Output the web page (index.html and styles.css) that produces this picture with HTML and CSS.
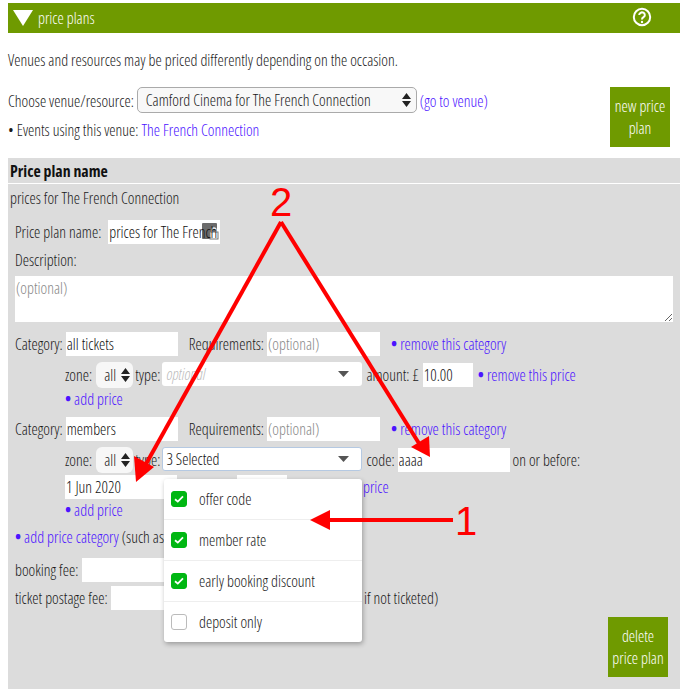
FILE: index.html
```html
<!DOCTYPE html>
<html lang="en">
<head>
<meta charset="utf-8">
<title>price plans</title>
<link rel="stylesheet" href="styles.css">
</head>
<body>
<div class="page">
  <header class="bar">
    <span class="tri"></span>
    <span class="bar-title">price plans</span>
    <svg class="help" width="20" height="20" viewBox="0 0 20 20"><circle cx="10" cy="10" r="8.2" fill="none" stroke="#fff" stroke-width="2"/><path d="M7.2 8a2.8 2.6 0 1 1 4.3 2.2c-1 .6-1.5 1.1-1.5 2.2" fill="none" stroke="#fff" stroke-width="2"/><circle cx="10" cy="15" r="1.2" fill="#fff"/></svg>
  </header>
  <p class="intro">Venues and resources may be priced differently depending on the occasion.</p>
  <div class="venue">
    <div class="venue-main">
      <div class="venue-row">
        <span class="nudge">Choose venue/resource:</span>
        <span class="select-big">Camford Cinema for The French Connection
          <svg class="updown" width="9" height="14" viewBox="0 0 9 14"><path d="M4.5 0 9 6H0zM4.5 14 0 8h9z" fill="#222"/></svg>
        </span>
        <a class="link nudge">(go to venue)</a>
      </div>
      <div class="events">• Events using this venue: <a class="link">The French Connection</a></div>
    </div>
    <div class="btn">new price plan</div>
  </div>
  <section class="panel">
    <div class="panel-head">Price plan name</div>
    <div class="panel-name">prices for The French Connection</div>
    <div class="row name-row">
      <span>Price plan name:</span>
      <span class="name-wrap">
        <svg class="lock" width="17" height="18" viewBox="0 0 17 18"><rect width="15" height="16" rx="1" fill="#6b6b6b"/><rect x="8" y="9" width="8" height="7" fill="#fff" stroke="#777"/><path d="M10 9V7a2 2 0 0 1 4 0v2" fill="none" stroke="#eee" stroke-width="1.3"/></svg>
        <input class="input name-input" value="prices for The French Connection">
      </span>
    </div>
    <div class="row desc-label">Description:</div>
    <textarea class="textarea" placeholder="(optional)"></textarea>

    <div class="row cat-row">
      <span>Category:</span><input class="input w112 ml3" value="all tickets">
      <span class="ml11">Requirements:</span><input class="input w113 ml3" placeholder="(optional)">
      <a class="link ml11"><i class="dot">•</i> remove this category</a>
    </div>
    <div class="row sub-row">
      <span>zone:</span>
      <span class="select-zone">all<svg width="9" height="14" viewBox="0 0 9 14"><path d="M4.5 0 9 6H0zM4.5 14 0 8h9z" fill="#222"/></svg></span>
      <span>type:</span>
      <span class="combo ph-it">optional<svg class="caret" width="11" height="6" viewBox="0 0 11 6"><path d="M0 0h11L5.500 6z" fill="#555"/></svg></span>
      <span class="ml4">amount: £</span><input class="input w50 ml4" value="10.00">
      <a class="link ml5"><i class="dot">•</i> remove this price</a>
    </div>
    <div class="row add-row"><a class="link"><i class="dot">•</i> add price</a></div>

    <div class="row cat-row cat2">
      <span>Category:</span><input class="input w112 ml3" value="members">
      <span class="ml11">Requirements:</span><input class="input w113 ml3" placeholder="(optional)">
      <a class="link ml11"><i class="dot">•</i> remove this category</a>
    </div>
    <div class="row sub-row">
      <span>zone:</span>
      <span class="select-zone">all<svg width="9" height="14" viewBox="0 0 9 14"><path d="M4.5 0 9 6H0zM4.5 14 0 8h9z" fill="#222"/></svg></span>
      <span>type:</span>
      <span class="combo focus">3 Selected<svg class="caret" width="11" height="6" viewBox="0 0 11 6"><path d="M0 0h11L5.500 6z" fill="#555"/></svg></span>
      <span class="ml4">code:</span><input class="input w112 ml3" value="aaaa">
      <span class="ml3">on or before:</span>
    </div>
    <div class="row date-row">
      <input class="input w112" value="1 Jun 2020">
      <input class="input w50 ml60">
      <a class="link price-link">price</a>
    </div>
    <div class="row add-row"><a class="link"><i class="dot">•</i> add price</a></div>
    <div class="row cat-add"><a class="link"><i class="dot">•</i> add price category</a>&nbsp;(such as</div>
    <div class="row fee"><span>booking fee:</span><input class="input w90 ml4"></div>
    <div class="row fee fee2"><span>ticket postage fee:</span><input class="input w90 ml3"><span class="note">if not ticketed)</span></div>
    <div class="panel-foot"><div class="btn">delete price plan</div></div>

    <ul class="menu">
      <li><span class="check on"><svg width="10" height="8" viewBox="0 0 10 8"><path d="M1 4.2 3.8 6.6 9 1.4" fill="none" stroke="#fff" stroke-width="1.8"/></svg></span>offer code</li>
      <li><span class="check on"><svg width="10" height="8" viewBox="0 0 10 8"><path d="M1 4.2 3.8 6.6 9 1.4" fill="none" stroke="#fff" stroke-width="1.8"/></svg></span>member rate</li>
      <li><span class="check on"><svg width="10" height="8" viewBox="0 0 10 8"><path d="M1 4.2 3.8 6.6 9 1.4" fill="none" stroke="#fff" stroke-width="1.8"/></svg></span>early booking discount</li>
      <li><span class="check"></span>deposit only</li>
    </ul>
  </section>
  <svg class="notes" width="685" height="694" viewBox="0 0 685 694">
    <g stroke="#f00" stroke-width="4" fill="none">
      <path d="M281 222 146 464"/>
      <path d="M281 222 420 445"/>
      <path d="M325 520H453"/>
    </g>
    <g fill="#f00">
      <path d="M136 482 134 456 154 467z"/>
      <path d="M430 457 411 447 429 436z"/>
      <path d="M310 520 330 510V530z"/>
    </g>
  </svg>
  <span class="note-num n2">2</span>
  <span class="note-num n1">1</span>
</div>
</body>
</html>
```
FILE: styles.css
```css
* { box-sizing: border-box; }
html, body { margin: 0; padding: 0; }
body {
  width: 685px;
  height: 694px;
  overflow: hidden;
  background: #fff;
  color: #1a1a1a;
  font-family: "Open Sans", "Liberation Sans", sans-serif;
  font-stretch: 75%;
  font-weight: 300;
  font-size: 15.85px;
  line-height: 20px;
}
.page { position: relative; height: 694px; padding: 3px 5px 0 8px; overflow: hidden; }
.bar { height: 30px; background: #6f9a00; color: #fff; display: flex; align-items: center; padding: 0 28px 0 5px; }
.tri { width: 0; height: 0; border-left: 10px solid transparent; border-right: 10px solid transparent; border-top: 16px solid #fff; }
.bar-title { margin-left: 5px; flex: 1; }
.help { margin-top: -3px; }
.intro { margin: 17px 0 0; height: 20px; }
.venue { display: flex; justify-content: space-between; padding-right: 10px; margin-top: 17px; height: 60px; }
.venue-row { display: flex; align-items: center; height: 26px; }
.nudge { padding-top: 2px; }
.select-big {
  display: flex; align-items: center; justify-content: space-between; width: 280px; height: 26px; margin-left: 3px;
  padding: 0 5px 0 8px; border: 1px solid #aaa; border-radius: 5px; background: #f8f8f8;
}
.link { color: #4b14ff; }
.venue-row .link { margin-left: 3px; }
.events { margin-top: 7px; }
.btn { width: 60px; height: 60px; background: #6f9a00; color: #fff; display: flex; align-items: center; justify-content: center; text-align: center; line-height: 22px; padding: 0 2px; }
.panel { position: relative; margin-top: 11px; height: 531px; background: #dcdcdc; }
.panel-head { height: 26px; border-bottom: 1px solid #fff; padding: 3px 2px 0; font-weight: 700; color: #111; }
.panel-name { height: 26px; padding: 4px 2px 0; }
.row { display: flex; align-items: center; }
.name-row { height: 24px; margin-top: 10px; padding-left: 7px; }
.input {
  display: block; height: 24px; border: 0; border-radius: 0; outline: 0; margin: 0; padding: 0 0 0 1px; background: #fff; color: #111;
  font: inherit; font-stretch: 75%;
}
.input::placeholder, .textarea::placeholder { color: #888; opacity: 1; }
.name-wrap { position: relative; display: block; width: 112px; height: 24px; margin-left: 7px; background: #fff; }
.name-input { position: relative; width: 112px; background: transparent; }
.lock { position: absolute; left: 94px; top: 3px; }
.desc-label { height: 20px; margin-top: 6px; padding-left: 7px; }
.textarea {
  display: block; width: 658px; height: 46px; margin: 6px 7px 0; padding: 2px 0 0 1px; border: 0; outline: 0; border-radius: 0; background: #fff; color: #111;
  font: inherit; font-stretch: 75%;
}
.cat-row { height: 24px; margin-top: 10px; padding-left: 7px; }
.cat2 { margin-top: 8px; }
.w112 { width: 112px; }
.w113 { width: 113px; }
.w50 { width: 50px; }
.w90 { width: 90px; }
.ml3 { margin-left: 3px; }
.ml4 { margin-left: 4px; }
.ml5 { margin-left: 5px; }
.ml11 { margin-left: 11px; }
.ml60 { margin-left: 60px; }
.dot { font-style: normal; font-weight: 700; }
.sub-row { height: 26px; margin-top: 6px; padding-left: 57px; }
.select-zone { display: flex; align-items: center; justify-content: space-between; width: 37px; height: 26px; margin: 0 2px 0 4px; padding: 0 3px 0 8px; background: #f7f7f7; border-radius: 6px; }
.combo { display: flex; align-items: center; justify-content: space-between; width: 200px; height: 24px; background: #fff; border-radius: 3px; margin: 0 0 2px 2px; padding: 0 13px 0 4px; color: #111; }
.ph-it { color: #bbb; font-style: italic; }
.focus { border: 1px solid #b5c9e2; padding: 0 12px 0 3px; }
.add-row { height: 20px; margin-top: 1px; padding-left: 57px; }
.date-row { height: 24px; margin-top: 2px; padding-left: 57px; }
.price-link { margin-left: 76px; }
.cat-add { height: 20px; margin-top: 7px; padding-left: 7px; }
.fee { height: 24px; margin-top: 11px; padding-left: 7px; }
.fee2 { margin-top: 4px; }
.note { position: absolute; left: 356px; }
.panel-foot { display: flex; justify-content: flex-end; padding-right: 12px; margin-top: 7px; }
.menu {
  position: absolute; left: 156px; top: 321px; width: 198px; height: 163px; margin: 0; padding: 0; list-style: none;
  background: #fff; border-radius: 3px; box-shadow: 1px 2px 5px rgba(0,0,0,.3);
}
.menu li { display: flex; align-items: center; height: 41px; padding-left: 7px; border-bottom: 1px solid #eee; }
.menu li:last-child { height: 40px; border-bottom: 0; }
.check { display: flex; align-items: center; justify-content: center; width: 16px; height: 16px; margin-right: 12px; border: 1px solid #bbb; border-radius: 3px; background: #fff; }
.check.on { background: #00b712; border-color: #00b712; }
.notes { position: absolute; left: 0; top: 0; pointer-events: none; }
.note-num { position: absolute; font-family: "Liberation Sans", sans-serif; font-stretch: normal; font-weight: 400; font-size: 40px; line-height: 40px; color: #f00; }
.n2 { left: 270px; top: 182px; }
.n1 { left: 455px; top: 501px; }
```
